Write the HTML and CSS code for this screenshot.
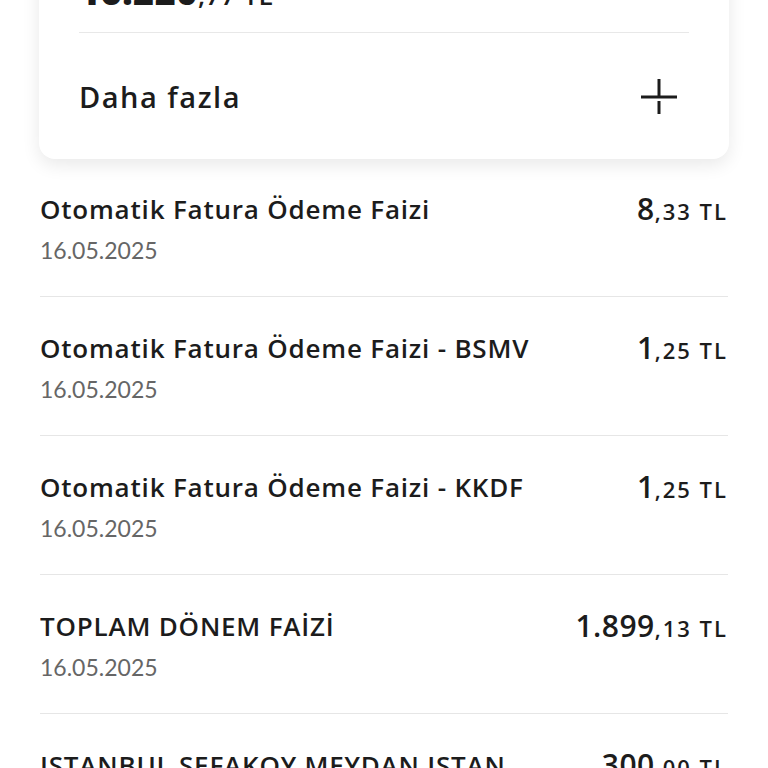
FILE: index.html
```html
<!DOCTYPE html>
<html lang="tr">
<head>
    <meta charset="UTF-8">
    <meta name="viewport" content="width=device-width, initial-scale=1.0">
    <title>Hesap Hareketleri</title>
    <link rel="stylesheet" href="styles.css">
</head>
<body>
    <div class="page">
        <div class="card">
            <div class="card-total">
                <span class="int">16.220</span><span class="dec">,77 TL</span>
            </div>
            <div class="card-more">
                <span>Daha fazla</span>
                <svg class="plus" width="36" height="36" viewBox="0 0 36 36">
                    <line x1="0" y1="18" x2="36" y2="18" stroke="#1c1c1c" stroke-width="3"/>
                    <line x1="18" y1="0" x2="18" y2="18" stroke="#1c1c1c" stroke-width="3"/>
                    <line x1="18" y1="22" x2="18" y2="35" stroke="#1c1c1c" stroke-width="3"/>
                </svg>
            </div>
        </div>

        <ul class="list">
            <li class="tx">
                <div class="tx-info">
                    <div class="tx-title">Otomatik Fatura Ödeme Faizi</div>
                    <div class="tx-date">16.05.2025</div>
                </div>
                <div class="tx-amount"><span class="int">8</span><span class="dec">,33 TL</span></div>
            </li>
            <li class="tx">
                <div class="tx-info">
                    <div class="tx-title">Otomatik Fatura Ödeme Faizi - BSMV</div>
                    <div class="tx-date">16.05.2025</div>
                </div>
                <div class="tx-amount"><span class="int">1</span><span class="dec">,25 TL</span></div>
            </li>
            <li class="tx">
                <div class="tx-info">
                    <div class="tx-title">Otomatik Fatura Ödeme Faizi - KKDF</div>
                    <div class="tx-date">16.05.2025</div>
                </div>
                <div class="tx-amount"><span class="int">1</span><span class="dec">,25 TL</span></div>
            </li>
            <li class="tx">
                <div class="tx-info">
                    <div class="tx-title">TOPLAM DÖNEM FAİZİ</div>
                    <div class="tx-date">16.05.2025</div>
                </div>
                <div class="tx-amount"><span class="int">1.899</span><span class="dec">,13 TL</span></div>
            </li>
            <li class="tx">
                <div class="tx-info">
                    <div class="tx-title">ISTANBUL SEFAKOY MEYDAN ISTAN</div>
                    <div class="tx-date">16.05.2025</div>
                </div>
                <div class="tx-amount"><span class="int">300</span><span class="dec">,00 TL</span></div>
            </li>
        </ul>
    </div>
</body>
</html>
```

FILE: styles.css
```css
html, body {
    margin: 0;
    padding: 0;
    background: #fff;
    overflow: hidden;
}
body {
    font-family: "Open Sans", "Noto Sans", sans-serif;
    color: #1c1c1c;
}
.page {
    padding: 0 39px;
    margin-top: -52px;
}
.card {
    background: #fff;
    border-radius: 16px;
    box-shadow: 0 6px 18px rgba(0,0,0,0.09);
    padding: 24px 40px 0;
}
.card-total {
    line-height: 40px;
    padding-bottom: 13px;
    border-bottom: 1px solid #e8e8e8;
    letter-spacing: 0.5px;
}
.card-total .int {
    font-size: 36px;
    font-weight: 800;
}
.card-total .dec {
    font-size: 26px;
    font-weight: 600;
}
.card-more {
    display: flex;
    align-items: center;
    justify-content: space-between;
    padding: 46px 12px 44px 0;
    font-size: 29px;
    font-weight: 600;
    letter-spacing: 1.5px;
    line-height: 32px;
}
.plus {
    display: block;
}
.list {
    list-style: none;
    margin: 0;
    padding: 0 1px;
}
.tx {
    display: flex;
    justify-content: space-between;
    align-items: flex-start;
    padding: 36px 0 32px;
    border-bottom: 1px solid #e6e6e6;
}
.tx:first-child {
    padding-top: 35px;
}
.tx-info {
    min-width: 0;
    overflow: hidden;
}
.tx-title {
    font-size: 26px;
    font-weight: 600;
    letter-spacing: 0.8px;
    line-height: 30px;
    white-space: nowrap;
}
.tx-date {
    margin-top: 12px;
    font-family: "Lato", sans-serif;
    font-size: 23px;
    line-height: 28px;
    color: #666;
}
.tx-amount {
    line-height: 30px;
    white-space: nowrap;
    padding-left: 20px;
}
.tx-amount .int {
    font-size: 30px;
    font-weight: 600;
    letter-spacing: 0.5px;
}
.tx-amount .dec {
    font-size: 22px;
    font-weight: 600;
    letter-spacing: 2px;
}
```
